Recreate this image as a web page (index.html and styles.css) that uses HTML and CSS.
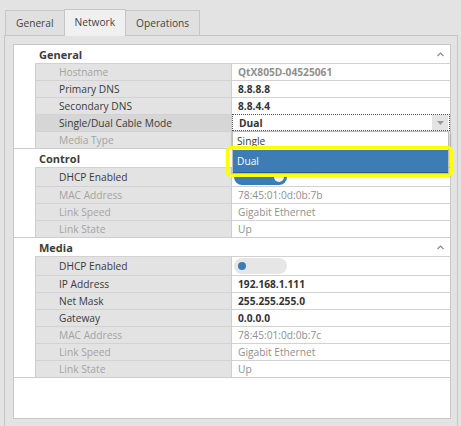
FILE: index.html
```html
<!DOCTYPE html>
<html>
<head>
<meta charset="utf-8">
<link rel="stylesheet" href="styles.css">
</head>
<body>
<div class="tabs">
  <div class="tab">General</div>
  <div class="tab active">Network</div>
  <div class="tab">Operations</div>
</div>
<div class="panel">
  <div class="grid">
    <div class="section">
      <div class="header"><span>General</span><svg class="caret" width="7" height="5" viewBox="0 0 7 5"><polyline points="0.5,4 3.5,1 6.5,4" fill="none" stroke="#8a8a8a" stroke-width="1.2"/></svg></div>
      <div class="row"><div class="indent"></div><div class="name ro">Hostname</div><div class="value ro bold">QtX805D-04525061</div></div>
      <div class="row"><div class="indent"></div><div class="name">Primary DNS</div><div class="value bold">8.8.8.8</div></div>
      <div class="row"><div class="indent"></div><div class="name">Secondary DNS</div><div class="value bold">8.8.4.4</div></div>
      <div class="row"><div class="indent"></div><div class="name sel">Single/Dual Cable Mode</div><div class="value bold editing"><span>Dual</span><div class="ddbtn"><svg width="7" height="4" viewBox="0 0 7 4"><polygon points="0,0 7,0 3.5,4" fill="#9a9a9a"/></svg></div>
        <div class="popup">
          <div class="opt">Single</div>
          <div class="opt hl">Dual</div>
        </div>
      </div></div>
      <div class="row"><div class="indent"></div><div class="name ro">Media Type</div><div class="value ro"></div></div>
    </div>
    <div class="section">
      <div class="header"><span>Control</span></div>
      <div class="row tall"><div class="indent"></div><div class="name">DHCP Enabled</div><div class="value"><div class="toggle on"><div class="knob"></div></div></div></div>
      <div class="row"><div class="indent"></div><div class="name ro">MAC Address</div><div class="value ro">78:45:01:0d:0b:7b</div></div>
      <div class="row"><div class="indent"></div><div class="name ro">Link Speed</div><div class="value ro">Gigabit Ethernet</div></div>
      <div class="row"><div class="indent"></div><div class="name ro">Link State</div><div class="value ro">Up</div></div>
    </div>
    <div class="section">
      <div class="header"><span>Media</span><svg class="caret" width="7" height="5" viewBox="0 0 7 5"><polyline points="0.5,4 3.5,1 6.5,4" fill="none" stroke="#8a8a8a" stroke-width="1.2"/></svg></div>
      <div class="row tall"><div class="indent"></div><div class="name">DHCP Enabled</div><div class="value"><div class="toggle"><div class="knob"></div></div></div></div>
      <div class="row"><div class="indent"></div><div class="name">IP Address</div><div class="value bold">192.168.1.111</div></div>
      <div class="row"><div class="indent"></div><div class="name">Net Mask</div><div class="value bold">255.255.255.0</div></div>
      <div class="row"><div class="indent"></div><div class="name">Gateway</div><div class="value bold">0.0.0.0</div></div>
      <div class="row"><div class="indent"></div><div class="name ro">MAC Address</div><div class="value ro">78:45:01:0d:0b:7c</div></div>
      <div class="row"><div class="indent"></div><div class="name ro">Link Speed</div><div class="value ro">Gigabit Ethernet</div></div>
      <div class="row"><div class="indent"></div><div class="name ro">Link State</div><div class="value ro">Up</div></div>
    </div>
  </div>
</div>
<div class="highlight"></div>
</body>
</html>
```
FILE: styles.css
```css
html, body {
  margin: 0;
  padding: 0;
  height: 426px;
  overflow: hidden;
}
body {
  background: #e3e3e3;
  font-family: "Open Sans", "Noto Sans", sans-serif;
  font-size: 10.2px;
  color: #3a3a3a;
  position: relative;
}
.tabs {
  display: flex;
  align-items: flex-end;
  padding: 0 0 0 5px;
  height: 35px;
  box-sizing: border-box;
  position: relative;
  z-index: 1;
}
.tab {
  height: 25px;
  box-sizing: border-box;
  border: 1px solid #c6c6c6;
  border-bottom: none;
  background: #e0e0e0;
  padding: 0 10px 1px 10px;
  display: flex;
  align-items: center;
  color: #444;
  margin-right: -1px;
}
.tab.active {
  height: 27px;
  background: #f0f0f0;
  margin-bottom: -1px;
  padding-bottom: 2px;
  position: relative;
  z-index: 2;
}
.panel {
  margin-left: 4px;
  width: 454px;
  height: 400px;
  box-sizing: border-box;
  border: 1px solid #c6c6c6;
  padding: 8px 6px 0 8px;
  background: #e3e3e3;
}
.grid {
  width: 438px;
  height: 375px;
  box-sizing: border-box;
  border: 1px solid #c8c8c8;
  background: #fff;
}
.section {
  border-bottom: 1px solid #cdcdcd;
}
.header {
  height: 18px;
  display: flex;
  align-items: center;
  padding-left: 25px;
  padding-right: 5px;
  font-weight: bold;
  font-size: 11px;
  color: #3c3c3c;
}
.header span { flex: 1; }
.caret { margin-right: 1px; }
.row {
  display: grid;
  grid-template-columns: 21px 197px 1fr;
  height: 17px;
}
.row.tall { height: 19px; }
.indent { background: #fff; }
.name {
  background: #e3e3e3;
  border-left: 1px solid #cdcdcd;
  border-right: 1px solid #cdcdcd;
  border-top: 1px solid #d2d2d2;
  padding-left: 23px;
  display: flex;
  align-items: center;
  color: #3a3a3a;
  white-space: nowrap;
}
.name.sel { background: #d6d6d6; }
.name.ro { color: #a3a3a3; }
.value {
  border-top: 1px solid #d2d2d2;
  padding-left: 6px;
  display: flex;
  align-items: center;
  white-space: nowrap;
  color: #333;
}
.value.ro { color: #8f8f8f; }
.value.bold { font-weight: bold; }
.value.editing {
  position: relative;
  border: 1px dotted #555;
  z-index: 3;
}
.value.editing span { flex: 1; }
.ddbtn {
  width: 16px;
  height: 15px;
  background: #e4e4e4;
  display: flex;
  align-items: center;
  justify-content: center;
  margin-right: 1px;
}
.popup {
  position: absolute;
  left: -1px;
  top: 16px;
  width: 217px;
  background: #fff;
  border: 1px solid #bdbdbd;
  box-shadow: 1px 2px 3px rgba(0,0,0,0.25);
  font-weight: normal;
  box-sizing: border-box;
}
.opt {
  height: 17px;
  display: flex;
  align-items: center;
  padding-left: 4px;
  color: #3a3a3a;
}
.opt.hl {
  margin-top: 1px;
  height: 23px;
  background: #3e7cb5;
  border-bottom: 1px solid #2f5f8c;
  box-sizing: border-box;
  color: #fff;
}
.toggle {
  width: 53px;
  height: 16px;
  border-radius: 8px;
  background: #e6e6e6;
  margin-left: -4px;
  position: relative;
}
.toggle .knob {
  position: absolute;
  left: 4px;
  top: 4px;
  width: 8px;
  height: 8px;
  border-radius: 50%;
  background: #3e7cb5;
}
.toggle.on { background: #3e7cb5; }
.toggle.on .knob {
  left: auto;
  right: 3px;
  top: 3px;
  width: 10px;
  height: 10px;
  background: #f2f2f2;
}
.highlight {
  position: absolute;
  left: 226px;
  top: 146px;
  width: 227px;
  height: 31px;
  box-sizing: border-box;
  border: 3px solid #ffff00;
  border-radius: 5px;
  z-index: 5;
}
```
